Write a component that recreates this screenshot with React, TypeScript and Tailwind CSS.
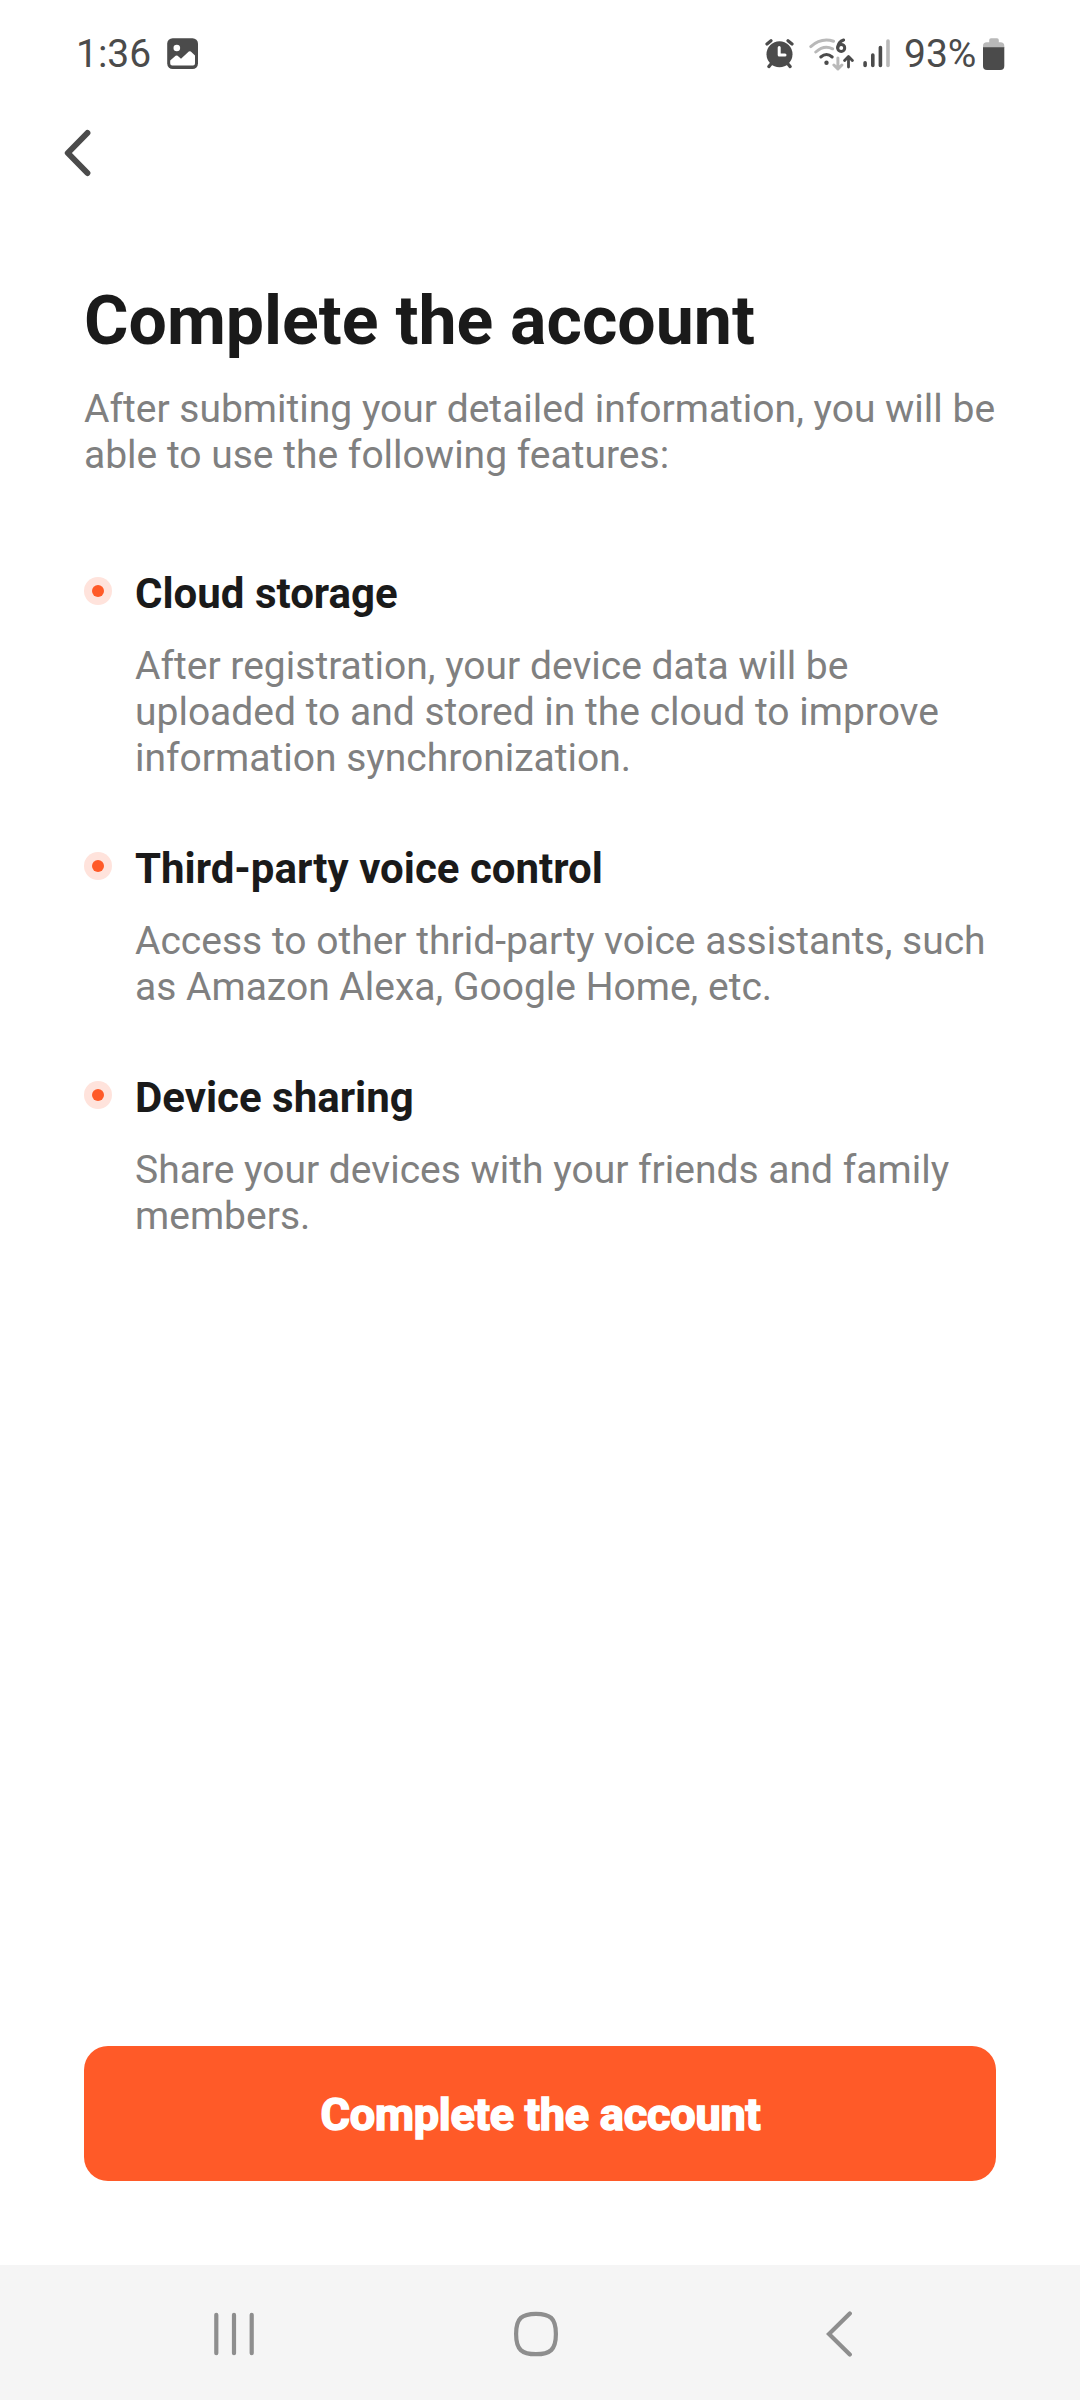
const items = [
  { title: "Cloud storage", lines: ["After registration, your device data will be", "uploaded to and stored in the cloud to improve", "information synchronization."] },
  { title: "Third-party voice control", lines: ["Access to other thrid-party voice assistants, such", "as Amazon Alexa, Google Home, etc."] },
  { title: "Device sharing", lines: ["Share your devices with your friends and family", "members."] },
];

function PictureIcon() {
  return (
    <svg className="ml-[17px]" width="32" height="32" viewBox="0 0 32 32">
      <rect x="0.2" y="0.2" width="30.8" height="30.8" rx="5.5" fill="#4b4b4b" />
      <circle cx="9.8" cy="10" r="3.3" fill="#fff" />
      <path d="M3.2 22.5 8.6 17.8Q9.6 17 10.6 17.8L14 20.8 21.8 13.6Q22.8 12.8 23.8 13.6L28 17.6V25.5Q28 27.4 26 27.4H5.2Q3.2 27.4 3.2 25.5Z" fill="#fff" />
    </svg>
  );
}

function AlarmIcon() {
  return (
    <svg width="30" height="32" viewBox="0 0 30 32" fill="none" stroke="#4b4b4b" strokeLinecap="round">
      <circle cx="14.5" cy="16.2" r="13" fill="#4b4b4b" stroke="none" />
      <path d="M2 6 6 2.8M27 6 23 2.8" strokeWidth="3.2" />
      <path d="M6 26 3.8 28.6M23 26 25.2 28.6" strokeWidth="3.2" />
      <path d="M14.2 9.6V17H20" stroke="#fff" strokeWidth="3" strokeLinejoin="round" />
    </svg>
  );
}

function WifiIcon() {
  return (
    <svg className="ml-[14px]" width="45" height="33" viewBox="0 0 45 33" fill="none" strokeLinecap="round" strokeLinejoin="round">
      <path d="M1.8 8.6Q12 -.6 24.5 3.2M6.8 14Q15 6.6 23.6 10.8" stroke="#b9b9b9" strokeWidth="3" />
      <path d="M11.8 19Q17.5 14 23.2 19" stroke="#4b4b4b" strokeWidth="3" />
      <circle cx="17.5" cy="24.7" r="2.2" fill="#4b4b4b" />
      <path d="M34.6 2Q29.2 3.8 28.7 9.6" stroke="#4b4b4b" strokeWidth="3" />
      <circle cx="32.2" cy="9.9" r="3.5" stroke="#4b4b4b" strokeWidth="3" />
      <path d="M28.9 20V31M24.9 27 28.9 31 32.9 27" stroke="#b9b9b9" strokeWidth="3" />
      <path d="M39.5 29V18.8M35.6 22.6 39.5 18.6 43.4 22.6" stroke="#4b4b4b" strokeWidth="2.8" />
    </svg>
  );
}

function SignalIcon() {
  return (
    <svg className="ml-[9px]" width="28" height="32" viewBox="0 0 28 32" strokeWidth="3.6" strokeLinecap="round">
      <path d="M2.1 27.5V24.8M9.8 27.5V17M17.4 27.5V9.5" stroke="#4b4b4b" />
      <path d="M25 27.5V3" stroke="#b9b9b9" />
    </svg>
  );
}

function BatteryIcon() {
  return (
    <svg className="ml-[8px]" width="22" height="33" viewBox="0 0 22 33">
      <path d="M6.2 2Q6.2.2 8 .2H14Q15.8.2 15.8 2V4.3H17.5Q21.3 4.3 21.3 8V10H0V8Q0 4.3 3.8 4.3H6.2Z" fill="#b9b9b9" />
      <path d="M0 9.2H21.3V28Q21.3 32 17.3 32H4Q0 32 0 28Z" fill="#4b4b4b" />
    </svg>
  );
}

export default function App() {
  return (
    <div className="flex h-[2400px] w-[1080px] flex-col bg-white font-['Roboto',sans-serif] text-[#1a1a1a]">
      <header className="flex h-[108px] items-center pr-[75px] pl-[76px] text-[39px] text-[#4b4b4b]">
        <span className="w-[74px] whitespace-nowrap">1:36</span>
        <PictureIcon />
        <div className="ml-auto flex items-center">
          <AlarmIcon />
          <WifiIcon />
          <SignalIcon />
          <span className="ml-[13px] w-[71px] whitespace-nowrap">93%</span>
          <BatteryIcon />
        </div>
      </header>
      <div className="h-[160px] pt-[20px] pl-[63px]">
        <svg width="28" height="50" viewBox="0 0 28 50" fill="none" stroke="#4b4b4b" strokeWidth="6" strokeLinecap="round" strokeLinejoin="round">
          <path d="M24.4 5 4.8 25 24.4 45" />
        </svg>
      </div>
      <main className="flex-1 px-[84px]">
        <h1 className="text-[68px] leading-[106px] font-bold whitespace-nowrap">Complete the account</h1>
        <p className="mt-[12px] text-[39px] leading-[46px] whitespace-nowrap text-[#808080]">After submiting your detailed information, you will be<br />able to use the following features:</p>
        <ul className="mt-[84px]">
          {items.map((it) => (
            <li key={it.title} className="mb-[57px] flex">
              <span className="mt-[15px] mr-[23px] flex size-[28px] items-center justify-center rounded-full bg-[#ffe3dc]">
                <span className="size-[12px] rounded-full bg-[#ff5a28]" />
              </span>
              <div>
                <h2 className="text-[42px] leading-[64px] font-bold">{it.title}</h2>
                <p className="mt-[17px] -mb-px text-[39px] leading-[46px] whitespace-nowrap text-[#808080]">{it.lines.map((l) => <span key={l} className="block">{l}</span>)}</p>
              </div>
            </li>
          ))}
        </ul>
      </main>
      <button className="mx-[84px] mb-[84px] h-[135px] rounded-[24px] bg-[#ff5a28] pt-[2px] pl-px text-[45px] font-bold tracking-[-0.2px] text-white [-webkit-text-stroke:1.6px_white]">Complete the account</button>
      <nav className="flex h-[135px] items-start bg-[#f5f5f5] pt-[46px] pl-[214px]">
        <svg width="40" height="46" viewBox="0 0 40 46" stroke="#8e8e8e" strokeWidth="4.2" strokeLinecap="round">
          <path d="M2.3 3.8V42.2M20 3.8V42.2M37.7 3.8V42.2" />
        </svg>
        <svg className="ml-[260px]" width="44" height="46" viewBox="0 0 44 46" fill="none" stroke="#8e8e8e" strokeWidth="4.2">
          <path d="M22 2.8C36 2.8 41.9 7 41.9 23S36 43.2 22 43.2 2.1 39 2.1 23 8 2.8 22 2.8Z" />
        </svg>
        <svg className="ml-[268px]" width="28" height="48" viewBox="0 0 28 48" fill="none" stroke="#8e8e8e" strokeWidth="4.2" strokeLinecap="round">
          <path d="M23.8 2.4 3 23 23.8 43.6" />
        </svg>
      </nav>
    </div>
  );
}
